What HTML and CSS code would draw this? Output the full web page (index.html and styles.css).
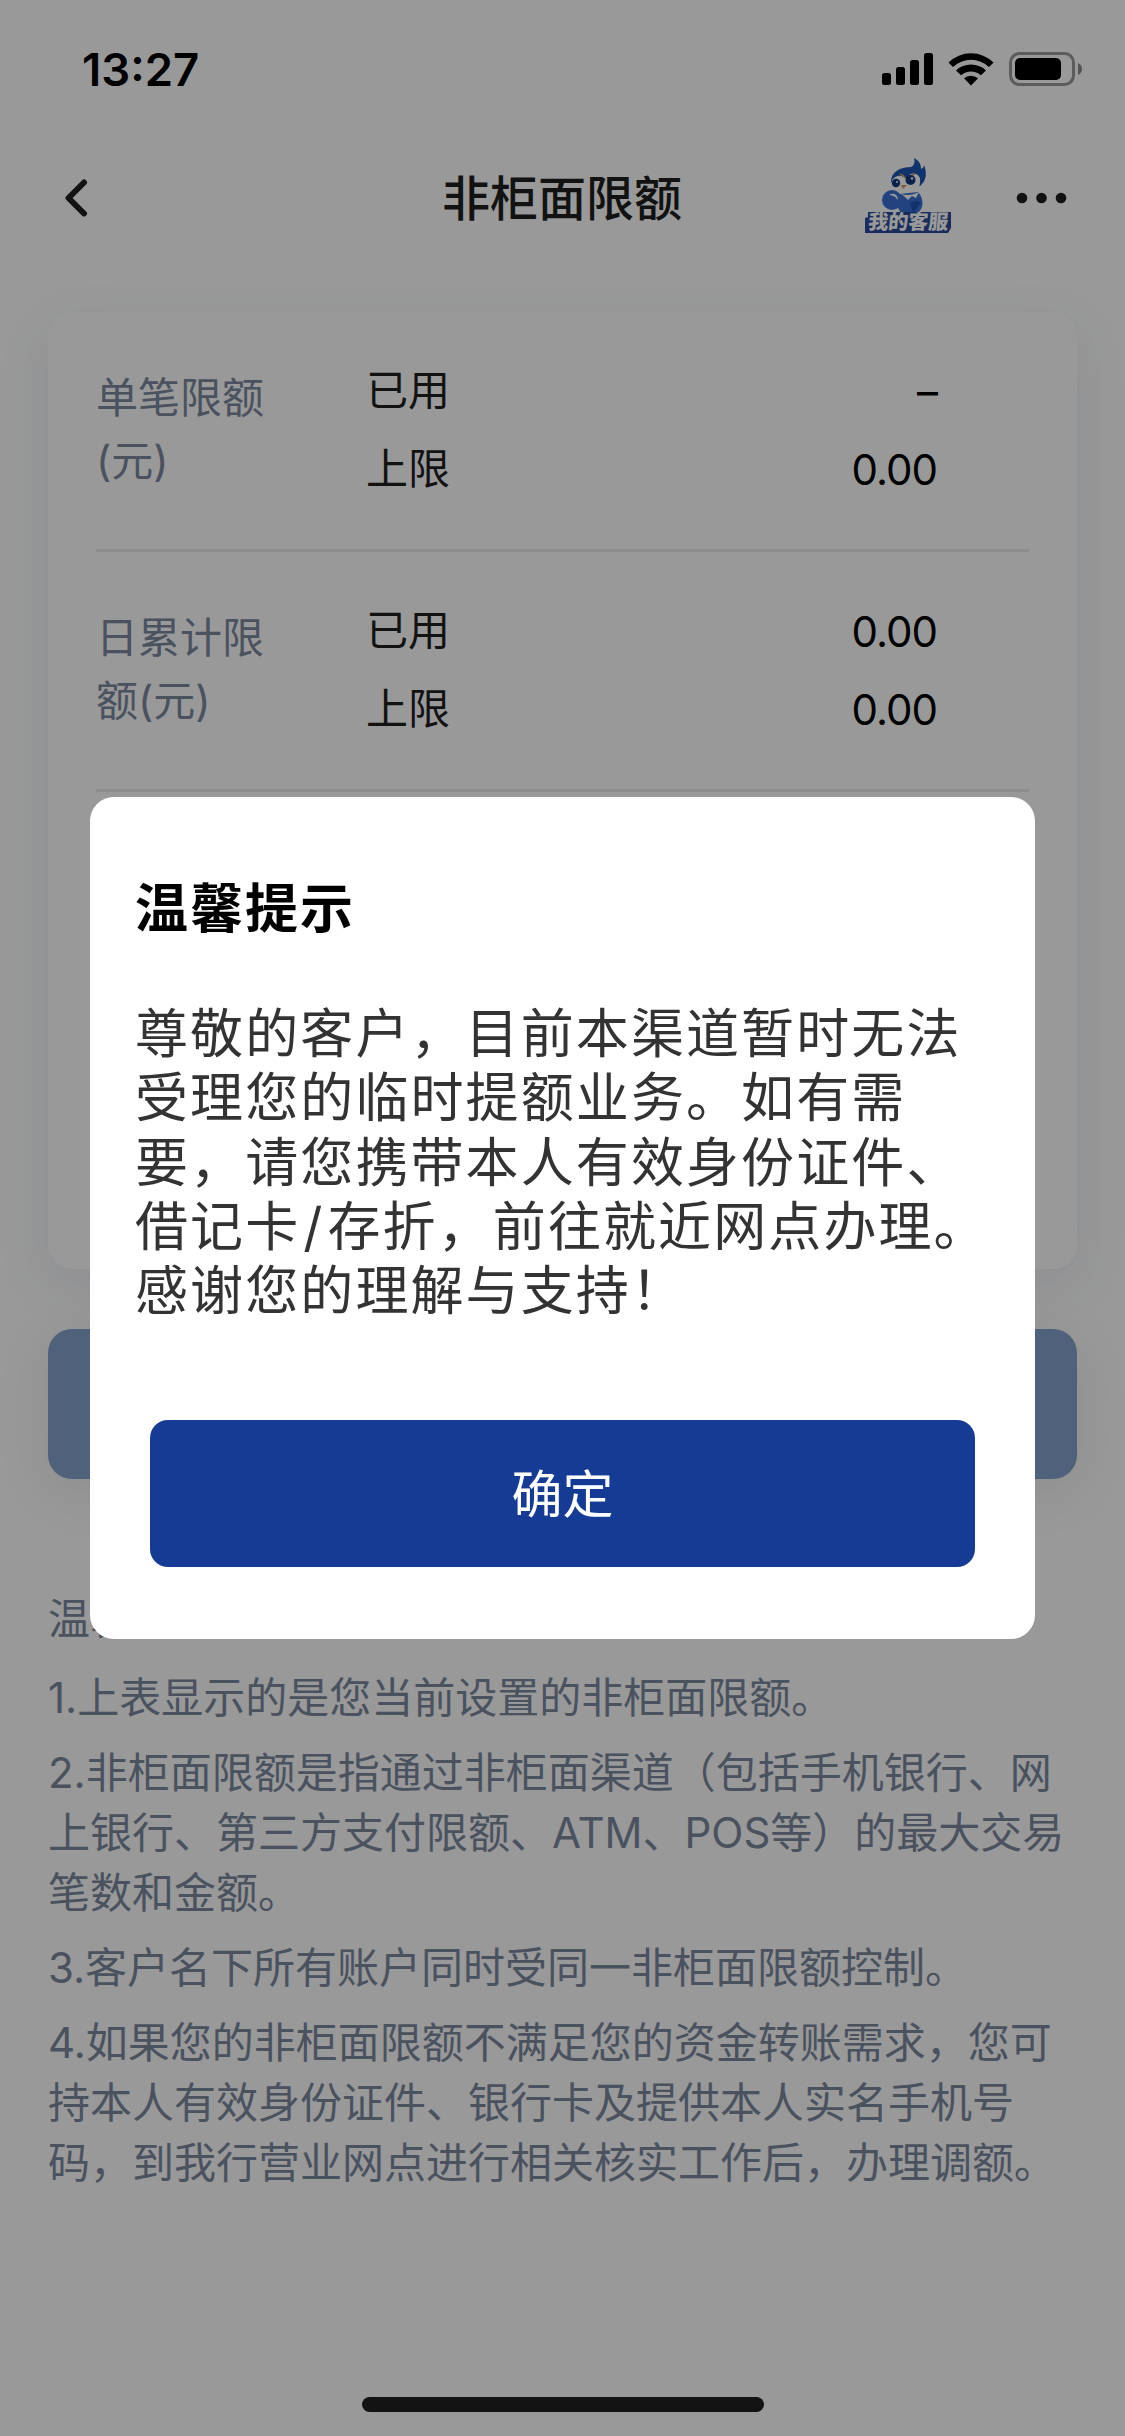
FILE: index.html
```html
<!DOCTYPE html>
<html lang="zh-CN">
<head>
    <meta charset="UTF-8">
    <title>非柜面限额</title>
    <link rel="stylesheet" href="styles.css">
</head>
<body>
    <div class="status-bar">
        <span class="time">13:27</span>
        <div class="status-icons">
            <svg class="signal" width="51" height="33" viewBox="0 0 51 33">
                <rect x="0" y="20" width="9" height="12" rx="2.5"/>
                <rect x="14" y="14" width="9" height="18" rx="2.5"/>
                <rect x="28" y="7" width="9" height="25" rx="2.5"/>
                <rect x="42" y="0" width="9" height="32" rx="2.5"/>
            </svg>
            <svg class="wifi" width="46" height="34" viewBox="0 0 46 34">
                <path d="M0.5 10.5 A32 32 0 0 1 45.5 10.5 L41 15 A26 26 0 0 0 5 15 Z"/>
                <path d="M8 18.5 A22 22 0 0 1 38 18.5 L33 23.3 A15 15 0 0 0 13 23.3 Z"/>
                <path d="M16 26.3 A10.5 10.5 0 0 1 30 26.3 L23 33.5 Z"/>
            </svg>
            <svg class="battery" width="74" height="34" viewBox="0 0 74 34">
                <rect class="battery-case" x="1.5" y="1.5" width="63" height="31" rx="9"/>
                <rect x="6" y="6" width="46" height="22" rx="5"/>
                <path class="battery-cap" d="M69 11 Q73 13 73 17 Q73 21 69 23 Z"/>
            </svg>
        </div>
    </div>

    <div class="nav-bar">
        <svg class="back" width="24" height="40" viewBox="0 0 24 40">
            <path d="M20 4.5 L4.5 20 L20 35.5"/>
        </svg>
        <h1>非柜面限额</h1>
        <div class="nav-right">
            <svg class="service" width="90" height="80" viewBox="0 0 90 80">
                <path class="navy" d="M27 24 C27 14 36 9 47 9 C51 7 51 3 50 0 C56 3 57 7 57 11 C59 10 60 9 60 7 C64 17 61 24 56 28 Z"/>
                <path class="white" d="M28 22 C33 16 38 17 43 21 C45 14 53 14 56 20 C57 30 52 36 43 37 C34 36 27 30 28 22 Z"/>
                <path class="orange" d="M35 16 C38 15 41 17 42 21 L38 18 Z M45 20 C46 16 49 15 52 16 L48 18 Z M37 27 L43 27 L39 31 Z"/>
                <circle class="dark" cx="32" cy="25" r="4.2"/>
                <circle class="dark" cx="46.5" cy="22" r="5"/>
                <circle class="white" cx="33" cy="24" r="1"/>
                <circle class="white" cx="48" cy="20.5" r="1.2"/>
                <path class="blue" d="M36 36 L54 34 C61 42 60 53 50 57 L38 57 L33 48 Z"/>
                <circle class="blue" cx="28" cy="42" r="10"/>
                <path class="white" d="M25 37 C30 34 34 37 34 42 C31 38 28 37 25 37 Z M37 36 C43 38 49 37 55 34 L52 40 L48 38 L44 42 L41 39 Z"/>
                <path class="navy" d="M46 46 C50 42 55 42 57 45 C54 47 53 52 49 54 Z"/>
                <path class="banner" d="M4 54 H87 V70 L84 75 H1 V60 L4 59 Z"/>
                <text transform="skewX(-5)" x="50" y="71.5" text-anchor="middle">我的客服</text>
            </svg>
            <svg class="more" width="52" height="12" viewBox="0 0 52 12">
                <circle cx="6" cy="6" r="5.3"/>
                <circle cx="25.5" cy="6" r="5.3"/>
                <circle cx="45" cy="6" r="5.3"/>
            </svg>
        </div>
    </div>

    <div class="card">
        <div class="limit-row">
            <div class="limit-name">单笔限额(元)</div>
            <div class="limit-type">已用<br>上限</div>
            <div class="limit-value">–<br>0.00</div>
        </div>
        <div class="limit-row">
            <div class="limit-name">日累计限额(元)</div>
            <div class="limit-type">已用<br>上限</div>
            <div class="limit-value">0.00<br>0.00</div>
        </div>
    </div>

    <div class="submit-btn"></div>

    <div class="notes">
        <h2>温馨提示</h2>
        <p>1.上表显示的是您当前设置的非柜面限额。</p>
        <p>2.非柜面限额是指通过非柜面渠道（包括手机银行、网<br>上银行、第三方支付限额、ATM、POS等）的最大交易<br>笔数和金额。</p>
        <p>3.客户名下所有账户同时受同一非柜面限额控制。</p>
        <p>4.如果您的非柜面限额不满足您的资金转账需求，您可<br>持本人有效身份证件、银行卡及提供本人实名手机号<br>码，到我行营业网点进行相关核实工作后，办理调额。</p>
    </div>

    <div class="mask">
        <div class="dialog">
            <h3>温馨提示</h3>
            <p>尊敬的客户，目前本渠道暂时无法<br>受理您的临时提额业务。如有需<br>要，请您携带本人有效身份证件、<br>借记卡<span class="slash">/</span>存折，前往就近网点办理。<br>感谢您的理解与支持！</p>
            <button class="ok-btn">确定</button>
        </div>
    </div>
    <div class="home-indicator"></div>
</body>
</html>
```

FILE: styles.css
```css
* {
    box-sizing: border-box;
}
body {
    margin: 0;
    width: 1125px;
    height: 2436px;
    overflow: hidden;
    position: relative;
    background-color: #fff;
    font-family: Inter, "Noto Sans CJK SC", sans-serif;
    font-size: 42px;
}
h1, h2, h3, p {
    margin: 0;
    font-weight: normal;
}

.status-bar {
    height: 132px;
    padding: 6px 42px 0 82px;
    display: flex;
    justify-content: space-between;
    align-items: center;
}
.time {
    font-size: 45.5px;
    font-weight: 600;
}
.status-icons {
    display: flex;
    align-items: center;
    gap: 15px;
}
.battery-case {
    fill: none;
    stroke: #000;
    stroke-opacity: 0.4;
    stroke-width: 3;
}
.battery-cap {
    fill-opacity: 0.45;
}

.nav-bar {
    height: 132px;
    padding: 0 57px 0 64px;
    display: grid;
    grid-template-columns: 378px auto 1fr;
    align-items: center;
}
.back path {
    fill: none;
    stroke: #1f1f1f;
    stroke-width: 6;
    stroke-linecap: round;
    stroke-linejoin: round;
}
.nav-bar h1 {
    padding-bottom: 7px;
    font-size: 48px;
    font-weight: 500;
    color: #1f1f1f;
}
.nav-right {
    display: flex;
    justify-content: flex-end;
    align-items: center;
    gap: 62px;
}
.more {
    fill: #1f1f1f;
}
.service .navy { fill: #1d55b4; }
.service .dark { fill: #123a80; }
.service .blue { fill: #3a70d4; }
.service .white { fill: #fff; }
.service .orange { fill: #d9975a; }
.service .banner { fill: #2b4a9b; }
.service text {
    font-family: "Noto Sans CJK SC", sans-serif;
    font-size: 20px;
    font-weight: 900;
    fill: #fff;
}

.card {
    height: 957px;
    margin: 48px 48px 0;
    padding: 0 48px;
    border-radius: 24px;
    box-shadow: 0 18px 54px rgba(60, 80, 130, 0.1);
}
.limit-row {
    height: 240px;
    padding-right: 92px;
    display: flex;
    border-bottom: 3px solid #ebebeb;
}
.limit-name {
    width: 270px;
    padding: 54px 98px 0 0;
    line-height: 63px;
    color: #7c899f;
}
.limit-type {
    flex: 1;
    padding-top: 40px;
    line-height: 78px;
    color: #1f1f1f;
}
.limit-value {
    padding-top: 41px;
    line-height: 78px;
    letter-spacing: -1px;
    text-align: right;
}

.submit-btn {
    height: 150px;
    margin: 60px 48px 0;
    border-radius: 24px;
    background-color: #84a2ce;
    box-shadow: 0 12px 54px rgba(60, 60, 60, 0.1);
}

.notes {
    padding: 110px 48px 0;
    line-height: 60px;
    color: #7c899f;
}
.notes h2 {
    font-size: 42px;
    margin-bottom: 19px;
}
.notes p {
    margin-bottom: 15px;
    white-space: nowrap;
}

/* popup */
.mask {
    position: absolute;
    top: 0;
    left: 0;
    width: 100%;
    height: 100%;
    padding: 797px 90px 0;
    background-color: rgba(0, 0, 0, 0.4);
}
.dialog {
    height: 842px;
    padding: 77px 45px 0;
    border-radius: 24px;
    background-color: #fff;
    font-size: 53px;
    letter-spacing: 2px;
}
.dialog h3 {
    font-size: 53px;
    font-weight: bold;
    line-height: 70px;
}
.dialog p {
    margin-top: 58px;
    line-height: 64.3px;
    letter-spacing: 2.1px;
    white-space: nowrap;
    color: #333;
}
.slash {
    padding: 0 3px;
}
.ok-btn {
    display: block;
    width: 825px;
    height: 147px;
    margin: 97px 0 0 15px;
    padding: 0 0 5px;
    border: none;
    border-radius: 18px;
    background-color: #163b95;
    color: #fff;
    font-family: inherit;
    font-size: 51px;
}
.home-indicator {
    position: absolute;
    left: 362px;
    bottom: 24px;
    width: 402px;
    height: 15px;
    border-radius: 8px;
    background-color: #131313;
}
```
